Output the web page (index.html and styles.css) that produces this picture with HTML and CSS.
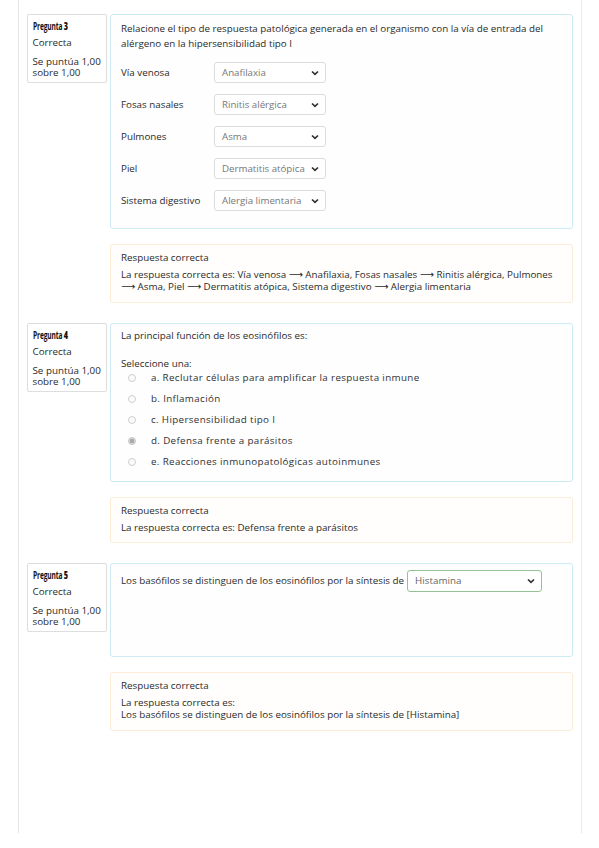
FILE: index.html
```html
<!DOCTYPE html>
<html lang="es">
<head>
<meta charset="utf-8">
<title>Revisión</title>
<link rel="stylesheet" href="styles.css">
</head>
<body>
<div class="page">

  <div class="que">
    <div class="info">
      <h3 class="qno"><span class="qno-in">Pregunta <b>3</b></span></h3>
      <div class="state">Correcta</div>
      <div class="grade">Se puntúa 1,00 sobre 1,00</div>
    </div>
    <div class="content">
      <div class="formulation f3">
        <p class="qtext">Relacione el tipo de respuesta patológica generada en el organismo con la vía de entrada del alérgeno en la hipersensibilidad tipo I</p>
        <div class="match">
          <span class="lbl">Vía venosa</span>
          <div class="select"><span>Anafilaxia</span><svg class="chev" width="8" height="6" viewBox="0 0 8 6"><path d="M1 1.5 L4 4.4 L7 1.5" fill="none" stroke="#333" stroke-width="1.7"/></svg></div>
          <span class="lbl">Fosas nasales</span>
          <div class="select"><span>Rinitis alérgica</span><svg class="chev" width="8" height="6" viewBox="0 0 8 6"><path d="M1 1.5 L4 4.4 L7 1.5" fill="none" stroke="#333" stroke-width="1.7"/></svg></div>
          <span class="lbl">Pulmones</span>
          <div class="select"><span>Asma</span><svg class="chev" width="8" height="6" viewBox="0 0 8 6"><path d="M1 1.5 L4 4.4 L7 1.5" fill="none" stroke="#333" stroke-width="1.7"/></svg></div>
          <span class="lbl">Piel</span>
          <div class="select"><span>Dermatitis atópica</span><svg class="chev" width="8" height="6" viewBox="0 0 8 6"><path d="M1 1.5 L4 4.4 L7 1.5" fill="none" stroke="#333" stroke-width="1.7"/></svg></div>
          <span class="lbl">Sistema digestivo</span>
          <div class="select"><span>Alergia limentaria</span><svg class="chev" width="8" height="6" viewBox="0 0 8 6"><path d="M1 1.5 L4 4.4 L7 1.5" fill="none" stroke="#333" stroke-width="1.7"/></svg></div>
        </div>
      </div>
      <div class="feedback fb3">
        <p class="fbtitle">Respuesta correcta</p>
        <p class="fbtext">La respuesta correcta es: Vía venosa ⟶ Anafilaxia, Fosas nasales ⟶ Rinitis alérgica, Pulmones ⟶ Asma, Piel ⟶ Dermatitis atópica, Sistema digestivo ⟶ Alergia limentaria</p>
      </div>
    </div>
  </div>

  <div class="que">
    <div class="info">
      <h3 class="qno"><span class="qno-in">Pregunta <b>4</b></span></h3>
      <div class="state">Correcta</div>
      <div class="grade">Se puntúa 1,00 sobre 1,00</div>
    </div>
    <div class="content">
      <div class="formulation f4">
        <p class="qtext">La principal función de los eosinófilos es:</p>
        <p class="prompt">Seleccione una:</p>
        <ul class="answers">
          <li><span class="radio"></span>a. Reclutar células para amplificar la respuesta inmune</li>
          <li><span class="radio"></span>b. Inflamación</li>
          <li><span class="radio"></span>c. Hipersensibilidad tipo I</li>
          <li><span class="radio checked"></span>d. Defensa frente a parásitos</li>
          <li><span class="radio"></span>e. Reacciones inmunopatológicas autoinmunes</li>
        </ul>
      </div>
      <div class="feedback fb4">
        <p class="fbtitle">Respuesta correcta</p>
        <p class="fbtext">La respuesta correcta es: Defensa frente a parásitos</p>
      </div>
    </div>
  </div>

  <div class="que">
    <div class="info">
      <h3 class="qno"><span class="qno-in">Pregunta <b>5</b></span></h3>
      <div class="state">Correcta</div>
      <div class="grade">Se puntúa 1,00 sobre 1,00</div>
    </div>
    <div class="content">
      <div class="formulation f5">
        <div class="inline">
          <span class="qtext5">Los basófilos se distinguen de los eosinófilos por la síntesis de</span>
          <div class="select correct"><span>Histamina</span><svg class="chev" width="8" height="6" viewBox="0 0 8 6"><path d="M1 1.5 L4 4.4 L7 1.5" fill="none" stroke="#333" stroke-width="1.7"/></svg></div>
        </div>
      </div>
      <div class="feedback fb5">
        <p class="fbtitle">Respuesta correcta</p>
        <p class="fbtext">La respuesta correcta es:<br>Los basófilos se distinguen de los eosinófilos por la síntesis de [Histamina]</p>
      </div>
    </div>
  </div>

</div>
</body>
</html>
```

FILE: styles.css
```css
html, body {
  margin: 0;
  padding: 0;
  background: #ffffff;
}

body {
  font-family: "Open Sans", "DejaVu Sans", sans-serif;
  font-size: 9.8px;
  color: #2a2a2a;
}

p, h3, ul {
  margin: 0;
  padding: 0;
}

.page {
  box-sizing: border-box;
  margin-left: 18px;
  width: 564px;
  height: 833px;
  border-left: 1px solid #e4e4e4;
  border-right: 1px solid #e9e9e9;
  padding: 14px 8px 0 8px;
}

.que {
  display: flex;
  align-items: flex-start;
  gap: 3px;
  margin-bottom: 20px;
}

/* info box */
.info {
  box-sizing: border-box;
  width: 80px;
  flex: none;
  border: 1px solid #dedede;
  border-radius: 2px;
  box-shadow: 0 0 1px rgba(0,0,0,0.06);
  padding: 5px 4px 4px 4.5px;
}

.qno {
  font-family: "Open Sans", sans-serif;
  font-weight: bold;
  font-size: 10px;
  line-height: 12px;
  color: #111;
  margin-bottom: 5px;
  white-space: nowrap;
}

.qno-in {
  display: inline-block;
  transform: scaleX(0.66);
  transform-origin: left center;
  letter-spacing: -0.2px;
}

.qno-in b {
  font-size: 11px;
}

.state {
  line-height: 12px;
  margin-bottom: 7px;
}

.grade {
  line-height: 11px;
}

/* right column */
.content {
  flex: 1;
  display: flex;
  flex-direction: column;
  gap: 15px;
}

.formulation {
  box-sizing: border-box;
  border: 1px solid #cbecf5;
  border-radius: 3px;
  background: #fefeff;
  padding: 5.5px 10px 17px 10px;
}

.qtext {
  line-height: 15px;
}

.match {
  display: grid;
  grid-template-columns: 93px 112px;
  grid-auto-rows: 21px;
  row-gap: 11px;
  align-items: center;
  margin-top: 11.5px;
}

.lbl {
  line-height: 12px;
  white-space: nowrap;
}

.select {
  box-sizing: border-box;
  height: 21px;
  display: flex;
  align-items: center;
  justify-content: space-between;
  border: 1px solid #dcdcdc;
  border-radius: 3px;
  background: #ffffff;
  padding: 0 6px 0 7px;
  color: #777777;
  font-size: 9.7px;
  white-space: nowrap;
}

.chev {
  flex: none;
  margin-left: 3px;
}

/* question 4 */
.f4 {
  padding: 4px 10px 11px 10px;
}

.prompt {
  line-height: 12px;
  margin-top: 14.7px;
}

.answers {
  list-style: none;
}

.answers li {
  display: flex;
  align-items: center;
  height: 16px;
  margin-bottom: 5px;
  letter-spacing: 0.35px;
  color: #303030;
}

.answers li:last-child {
  margin-bottom: 0;
}

.radio {
  box-sizing: border-box;
  flex: none;
  width: 8px;
  height: 8px;
  border-radius: 50%;
  border: 1px solid #cfcfcf;
  background: #fbfbfb;
  margin-left: 6.5px;
  margin-right: 15.5px;
}

.radio.checked {
  background: radial-gradient(circle, #a9a9a9 0 2px, #dcdcdc 2.6px);
  border-color: #c4c4c4;
}

/* question 5 */
.f5 {
  height: 94px;
  padding: 6px 10px 10px 10px;
}

.inline {
  display: flex;
  align-items: center;
  gap: 3px;
}

.select.correct {
  width: 135px;
  height: 22px;
  border-color: #93c293;
  border-radius: 3px;
  font-size: 9.8px;
  color: #666666;
}

/* feedback */
.feedback {
  box-sizing: border-box;
  border: 1px solid #fcebd6;
  border-radius: 3px;
  background: #fffefc;
  padding: 7px 10px 9px 10px;
}

.fbtitle {
  line-height: 12px;
  margin-bottom: 5px;
}

.fbtext {
  line-height: 12px;
}

.fb4 {
  padding-bottom: 8px;
}
```
